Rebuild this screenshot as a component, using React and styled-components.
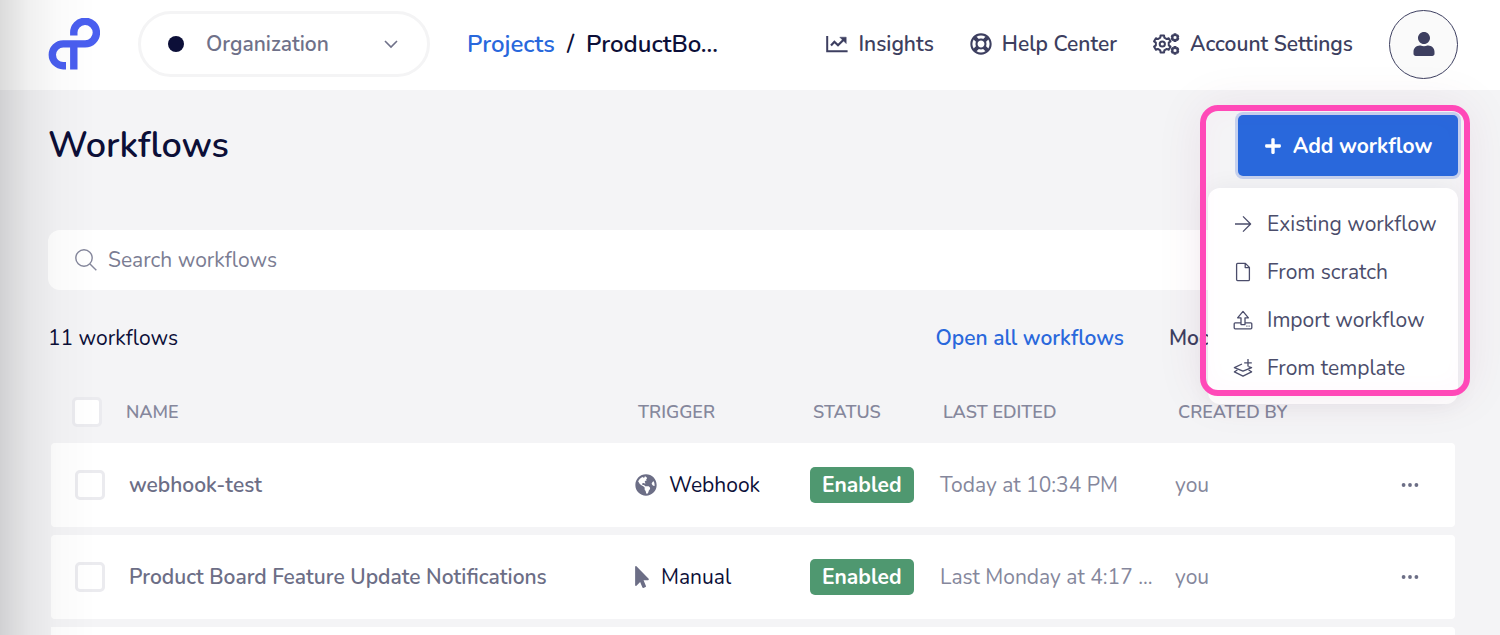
import styled, { createGlobalStyle } from "styled-components";
import {
  FaGlobeAmericas,
  FaMousePointer,
  FaPlus,
  FaRegLifeRing,
  FaUser,
} from "react-icons/fa";

const workflows = [
  {
    name: "webhook-test",
    trigger: "Webhook",
    edited: "Today at 10:34 PM",
    author: "you",
  },
  {
    name: "Product Board Feature Update Notifications",
    trigger: "Manual",
    edited: "Last Monday at 4:17 ...",
    author: "you",
  },
];

const Logo = () => (
  <svg width="52" height="52" viewBox="0 0 52 52" fill="none" aria-hidden="true">
    <path
      d="M25.8 17.5V15A11.3 11.3 0 1 1 37 25.9H15.2A10.9 10.9 0 0 0 15.2 47.7H18M25.8 26V51.4"
      stroke="#4a5ff0"
      strokeWidth="7.4"
    />
  </svg>
);

const ChartIcon = () => (
  <svg width="22" height="18" viewBox="0 0 22 18" fill="none" stroke="currentColor" aria-hidden="true">
    <path d="M1.2 1V16.2H21.6" strokeWidth="2" />
    <path d="M5 10.6L8.4 6.8L12 10.2L17.6 4.8" strokeWidth="2.2" />
    <path d="M13.8 2.2H20.2V8.6Z" fill="currentColor" strokeWidth="0.5" />
  </svg>
);

// outline of a cog, centred on cx, cy
const cogPath = (cx, cy, teeth, outer, inner) => {
  const step = (Math.PI * 2) / teeth;
  const points = [];
  for (let i = 0; i < teeth; i++) {
    const a = i * step - Math.PI / 2;
    [
      [-0.2, outer],
      [0.2, outer],
      [0.3, inner],
      [0.7, inner],
    ].forEach(([k, r]) => {
      points.push(
        `${(cx + r * Math.cos(a + k * step)).toFixed(2)} ${(cy + r * Math.sin(a + k * step)).toFixed(2)}`
      );
    });
  }
  return `M${points.join("L")}Z`;
};

const CogsIcon = () => (
  <svg
    width="27"
    height="22"
    viewBox="0 0 27 22"
    fill="none"
    stroke="currentColor"
    strokeWidth="2"
    strokeLinejoin="round"
    aria-hidden="true"
  >
    <path d={cogPath(9.3, 11, 6, 8.6, 6.6)} />
    <circle cx="9.3" cy="11" r="2.6" />
    <path d={cogPath(22, 4.6, 6, 3.4, 2.5)} />
    <path d={cogPath(22, 17.4, 6, 3.4, 2.5)} />
  </svg>
);

const ChevronIcon = () => (
  <svg width="14" height="10" viewBox="0 0 14 10" fill="none" aria-hidden="true">
    <path d="M1 2L7 8L13 2" stroke="#6f7189" strokeWidth="1.6" />
  </svg>
);

const DotsIcon = () => (
  <svg width="18" height="6" viewBox="0 0 18 6" fill="currentColor" aria-hidden="true">
    <circle cx="2.6" cy="3" r="1.9" />
    <circle cx="9" cy="3" r="1.9" />
    <circle cx="15.4" cy="3" r="1.9" />
  </svg>
);

const SearchIcon = () => (
  <svg width="22" height="22" viewBox="0 0 22 22" fill="none" stroke="#85879c" strokeWidth="1.4" aria-hidden="true">
    <circle cx="9" cy="9" r="8.2" />
    <path d="M15 15L21.3 21.3" />
  </svg>
);

const MenuIcon = ({ children }) => (
  <svg
    width="20"
    height="20"
    viewBox="0 0 20 20"
    fill="none"
    stroke="currentColor"
    strokeWidth="1.3"
    strokeLinejoin="round"
    aria-hidden="true"
  >
    {children}
  </svg>
);

const menuItems = [
  {
    label: "Existing workflow",
    icon: <path d="M2 10H17.6M10 2.4L17.6 10L10 17.6" />,
  },
  {
    label: "From scratch",
    icon: <path d="M4.6 1.4H12.4L16.4 5.4V17.4Q16.4 18.6 15.4 18.6H4.6Q3.6 18.6 3.6 17.6V2.4Q3.6 1.4 4.6 1.4ZM12.2 1.6V5.6H16.2" />,
  },
  {
    label: "Import workflow",
    icon: (
      <path d="M8 14.6V7.8H4.6L10 1.4L15.4 7.8H12V14.6ZM8 12.8H2.2Q1.2 12.8 1.2 13.8V17.8Q1.2 18.8 2.2 18.8H17.8Q18.8 18.8 18.8 17.8V13.8Q18.8 12.8 17.8 12.8H12M13.4 16.2H14.4M15.6 16.2H16.6" />
    ),
  },
  {
    label: "From template",
    icon: (
      <path d="M9 6L1.4 9.6L10 13.2L18.6 9.6L15.4 8.6M4.4 12L1.4 13.8L10 18.2L18.6 13.8L15.6 12M15 1V8.4M11.2 4.8H18.8" />
    ),
  },
];

const App = () => {
  return (
    <Page>
      <GlobalStyle />
      <Header>
        <LogoLink href="#home" aria-label="Home">
          <Logo />
        </LogoLink>
        <OrgPicker>
          <Dot />
          <select aria-label="Organization">
            <option>Organization</option>
          </select>
          <ChevronIcon />
        </OrgPicker>
        <Breadcrumb>
          <a href="#projects">Projects</a>
          <span>/</span>
          <span>ProductBo...</span>
        </Breadcrumb>
        <Nav>
          <NavLink href="#insights">
            <ChartIcon />
            Insights
          </NavLink>
          <NavLink href="#help">
            <FaRegLifeRing size={22} />
            Help Center
          </NavLink>
          <NavLink href="#settings">
            <CogsIcon />
            Account Settings
          </NavLink>
          <Avatar aria-label="Profile">
            <FaUser size={24} />
          </Avatar>
        </Nav>
      </Header>
      <Main>
        <TitleRow>
          <h1>Workflows</h1>
          <AddArea>
            <AddButton>
              <FaPlus size={18} />
              Add workflow
            </AddButton>
            <Menu>
              {menuItems.map((item) => (
                <MenuItem key={item.label}>
                  <MenuIcon>{item.icon}</MenuIcon>
                  {item.label}
                </MenuItem>
              ))}
            </Menu>
            <Highlight />
          </AddArea>
        </TitleRow>
        <Search>
          <SearchIcon />
          <input type="text" placeholder="Search workflows" aria-label="Search workflows" />
        </Search>
        <Summary>
          <span>11 workflows</span>
          <OpenAll href="#all">Open all workflows</OpenAll>
          <MockLink href="#mock">Moc</MockLink>
        </Summary>
        <Table>
          <colgroup>
            <Col $width={75} />
            <col />
            <Col $width={175} />
            <Col $width={130} />
            <Col $width={235} />
            <Col $width={215} />
            <Col $width={65} />
          </colgroup>
          <thead>
            <tr>
              <HeadCheck>
                <Checkbox type="checkbox" aria-label="Select all" />
              </HeadCheck>
              <HeadName>Name</HeadName>
              <HeadCell>Trigger</HeadCell>
              <HeadCell>Status</HeadCell>
              <HeadCell>Last edited</HeadCell>
              <HeadCell>Created by</HeadCell>
              <td />
            </tr>
          </thead>
          <tbody>
            {workflows.map((w) => (
              <Row key={w.name}>
                <CheckCell>
                  <Checkbox type="checkbox" aria-label={w.name} />
                </CheckCell>
                <NameCell>{w.name}</NameCell>
                <td>
                  <Trigger>
                    {w.trigger === "Webhook" ? <FaGlobeAmericas size={22} /> : <Cursor />}
                    <span>{w.trigger}</span>
                  </Trigger>
                </td>
                <td>
                  <Badge>Enabled</Badge>
                </td>
                <MutedCell>{w.edited}</MutedCell>
                <MutedCell>{w.author}</MutedCell>
                <td>
                  <MoreButton aria-label="More">
                    <DotsIcon />
                  </MoreButton>
                </td>
              </Row>
            ))}
            <Row>
              <td colSpan={7} />
            </Row>
          </tbody>
        </Table>
      </Main>
      <EdgeShade />
    </Page>
  );
};

const GlobalStyle = createGlobalStyle`
  * {
    box-sizing: border-box;
  }
  body {
    margin: 0;
    background: #f4f4f6;
    color: #0c0f38;
    font-family: Nunito, Lato, "Open Sans", sans-serif;
    font-size: 21px;
    line-height: 28px;
  }
  button, input, select {
    font: inherit;
  }
  a {
    text-decoration: none;
  }
`;
const Page = styled.div`
  display: flex;
  flex-direction: column;
  height: 100vh;
  overflow: hidden;
`;
const Header = styled.header`
  display: flex;
  align-items: center;
  flex-shrink: 0;
  height: 90px;
  padding: 0 42px 2px 48px;
  background: #fff;
`;
const LogoLink = styled.a`
  display: flex;
  margin-right: 38px;
`;
const OrgPicker = styled.div`
  position: relative;
  display: flex;
  align-items: center;
  width: 292px;
  height: 66px;
  select {
    width: 100%;
    height: 100%;
    padding: 0 48px 0 65px;
    border: 3px solid #f4f4f5;
    border-radius: 33px;
    background: transparent;
    color: #6f7189;
    font-weight: 600;
    appearance: none;
  }
  svg {
    position: absolute;
    right: 32px;
    pointer-events: none;
  }
`;
const Dot = styled.span`
  position: absolute;
  left: 30px;
  width: 16px;
  height: 16px;
  border-radius: 50%;
  background: #0c0f38;
`;
const Breadcrumb = styled.nav`
  display: flex;
  gap: 12px;
  margin-left: 37px;
  font-size: 24px;
  font-weight: 600;
  white-space: nowrap;
  a {
    color: #2968dc;
  }
`;
const Nav = styled.nav`
  display: flex;
  align-items: center;
  gap: 36px;
  margin-left: auto;
`;
const NavLink = styled.a`
  display: flex;
  align-items: center;
  gap: 10px;
  color: #3d3f60;
  font-weight: 600;
  white-space: nowrap;
`;
const Avatar = styled.button`
  display: flex;
  align-items: center;
  justify-content: center;
  width: 69px;
  height: 69px;
  padding: 0;
  border: 1px solid #3d3f60;
  border-radius: 50%;
  background: #fafafa;
  color: #3d3f60;
`;
const Main = styled.main`
  flex: 1;
  min-height: 0;
  padding: 25px 42px 0 48px;
`;
const TitleRow = styled.div`
  display: flex;
  align-items: center;
  justify-content: space-between;
  h1 {
    margin: 0;
    font-size: 36px;
    line-height: 44px;
    font-weight: 600;
  }
`;
const AddArea = styled.div`
  position: relative;
  z-index: 1;
`;
const AddButton = styled.button`
  display: flex;
  align-items: center;
  justify-content: center;
  gap: 11px;
  width: 220px;
  height: 61px;
  padding: 0;
  border: none;
  border-radius: 5px;
  background: #2968dc;
  box-shadow: 0 0 0 3px #c6d1ee;
  color: #fff;
  font-weight: 700;
`;
const Menu = styled.div`
  position: absolute;
  top: 73px;
  right: 0;
  width: 250px;
  padding: 12px 0;
  border-radius: 12px;
  background: #fff;
  box-shadow: 0 0 24px rgba(12, 15, 56, 0.06);
`;
const MenuItem = styled.button`
  display: flex;
  align-items: center;
  gap: 14px;
  width: 100%;
  height: 48px;
  padding: 0 0 0 25px;
  border: none;
  background: none;
  color: #4b4d6b;
  text-align: left;
  white-space: nowrap;
`;
const Highlight = styled.div`
  position: absolute;
  top: -10px;
  right: -12px;
  width: 270px;
  height: 291px;
  border: 6px solid #ff49b8;
  border-radius: 18px;
  box-shadow: 0 0 48px rgba(120, 20, 80, 0.08), inset 0 0 24px rgba(255, 73, 184, 0.03);
  pointer-events: none;
`;
const Search = styled.div`
  display: flex;
  align-items: center;
  gap: 11px;
  height: 60px;
  margin-top: 54px;
  padding: 0 27px;
  border-radius: 12px;
  background: #fff;
  input {
    flex: 1;
    padding: 0;
    border: none;
    outline: none;
    background: none;
    color: #0c0f38;
  }
  input::placeholder {
    color: #7b7d93;
    opacity: 1;
  }
`;
const Summary = styled.div`
  display: flex;
  margin-top: 34px;
`;
const OpenAll = styled.a`
  margin-left: auto;
  margin-right: 45px;
  color: #2968dc;
  font-weight: 600;
`;
const MockLink = styled.a`
  width: 289px;
  color: #3d3f60;
  font-weight: 600;
`;
const Table = styled.table`
  width: calc(100% - 6px);
  margin: 29px 3px 0;
  border-spacing: 0 8px;
  table-layout: fixed;
  th,
  td {
    padding: 0;
    text-align: left;
    white-space: nowrap;
  }
  thead tr {
    height: 46px;
  }
`;
const Col = styled.col`
  width: ${(props) => props.$width}px;
`;
const HeadCell = styled.th`
  && {
    padding-left: 3px;
  }
  color: #85879c;
  font-size: 18px;
  font-weight: 600;
  text-transform: uppercase;
`;
const HeadName = styled(HeadCell)`
  && {
    padding-left: 0;
  }
`;
const HeadCheck = styled.th`
  && {
    padding-left: 21px;
  }
`;
const Row = styled.tr`
  height: 84px;
  td {
    background: #fff;
  }
  td:first-child {
    border-radius: 4px 0 0 4px;
  }
  td:last-child {
    border-radius: 0 4px 4px 0;
  }
`;
const CheckCell = styled.td`
  && {
    padding-left: 24px;
  }
`;
const NameCell = styled.td`
  && {
    padding-left: 3px;
  }
  color: #6c6e86;
  font-weight: 600;
`;
const MutedCell = styled.td`
  color: #85879c;
`;
const Checkbox = styled.input`
  display: block;
  width: 30px;
  height: 30px;
  margin: 0;
  border: 3px solid #ebebef;
  border-radius: 5px;
  background: #fff;
  appearance: none;
`;
const Trigger = styled.div`
  display: flex;
  align-items: center;
  gap: 12px;
  svg {
    color: #6c6e86;
  }
`;
const Cursor = styled(FaMousePointer)`
  width: 14px;
  height: 22px;
`;
const Badge = styled.span`
  display: inline-block;
  padding: 4px 12px;
  border-radius: 5px;
  background: #4f9870;
  color: #fff;
  font-weight: 700;
`;
const MoreButton = styled.button`
  display: flex;
  padding: 0 11px;
  border: none;
  background: none;
  color: #6c6e86;
`;
const EdgeShade = styled.div`
  position: fixed;
  top: 0;
  bottom: 0;
  left: 0;
  z-index: 2;
  width: 96px;
  background: linear-gradient(
    to right,
    rgba(0, 0, 0, 0.14),
    rgba(0, 0, 0, 0.06) 30%,
    rgba(0, 0, 0, 0.02) 60%,
    rgba(0, 0, 0, 0)
  );
  pointer-events: none;
`;

export default App;
